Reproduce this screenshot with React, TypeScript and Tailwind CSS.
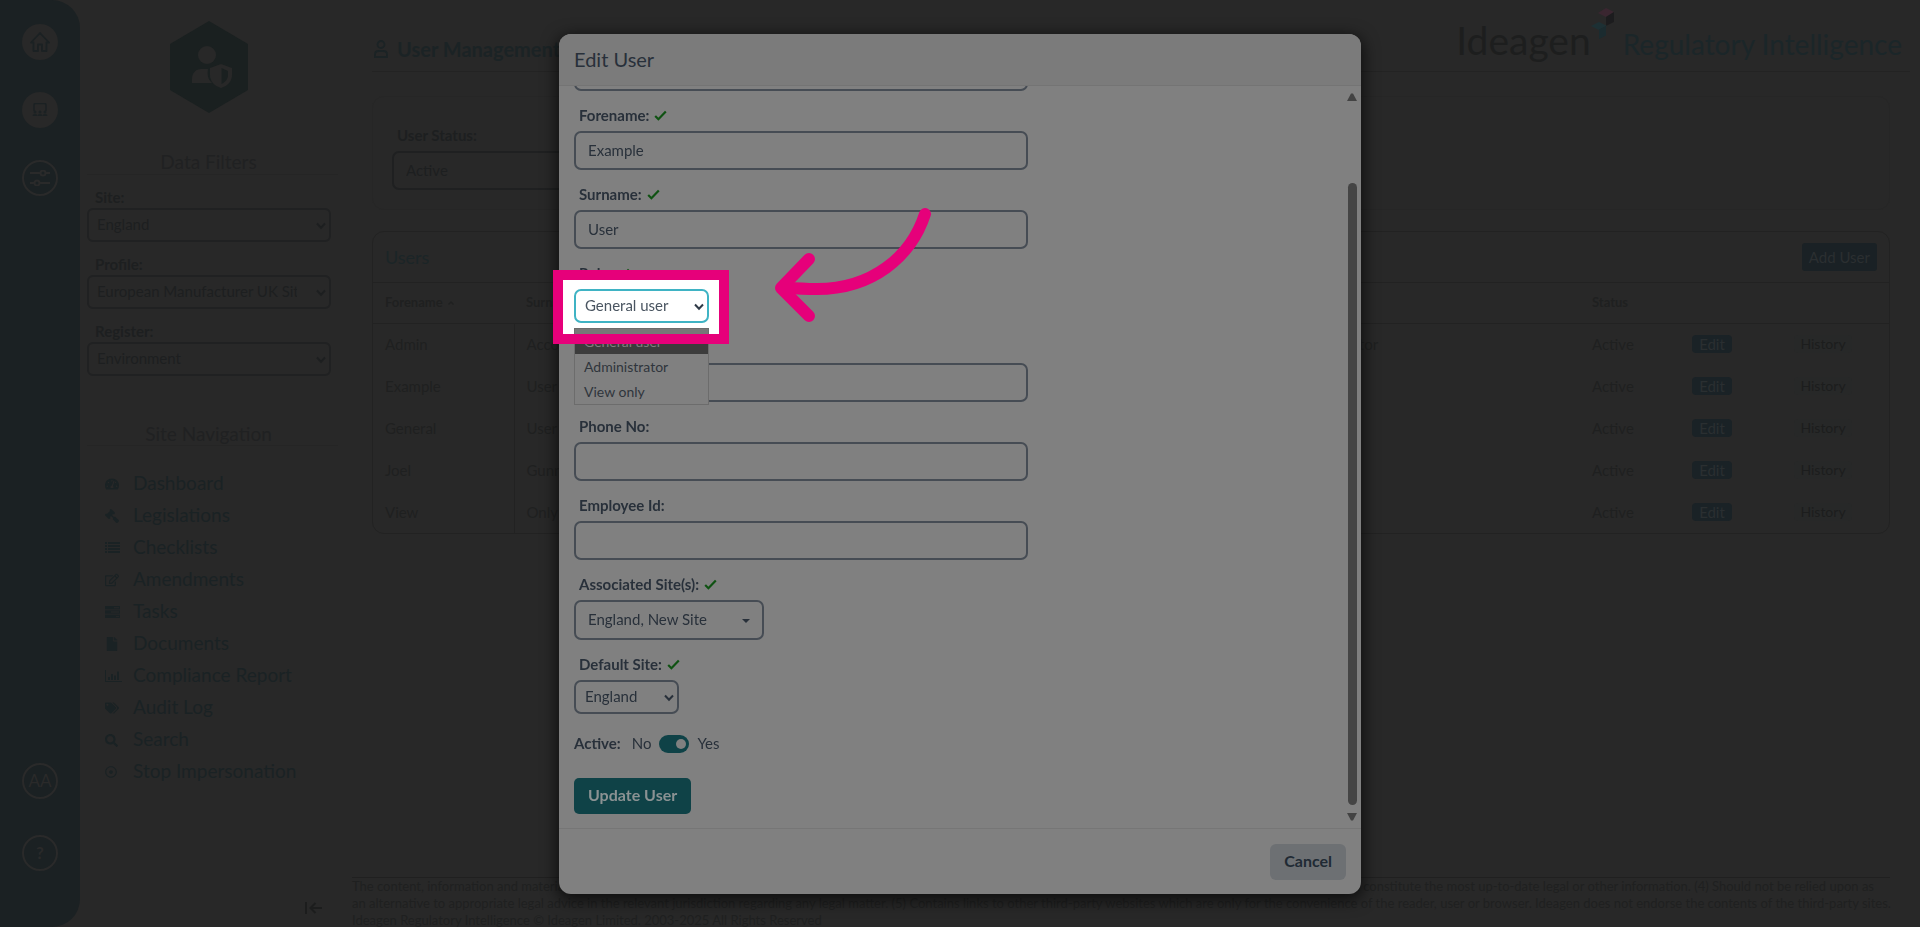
import React, { useState } from "react";
import { FaTachometerAlt, FaGavel, FaRegEdit, FaFile, FaTags, FaSearch, FaRegDotCircle } from "react-icons/fa";

const navItems = [
  { label: "Dashboard", icon: <FaTachometerAlt size={14} /> },
  { label: "Legislations", icon: <FaGavel size={14} className="-scale-x-100" /> },
  { label: "Checklists", icon: <ListIcon /> },
  { label: "Amendments", icon: <FaRegEdit size={14} /> },
  { label: "Tasks", icon: <TasksIcon /> },
  { label: "Documents", icon: <FaFile size={14} /> },
  { label: "Compliance Report", icon: <ChartIcon /> },
  { label: "Audit Log", icon: <FaTags size={14} /> },
  { label: "Search", icon: <FaSearch size={13} /> },
  { label: "Stop Impersonation", icon: <FaRegDotCircle size={12} /> },
];

const users = [
  { forename: "Admin", surname: "Account", role: "Administrator" },
  { forename: "Example", surname: "User", role: "" },
  { forename: "General", surname: "User", role: "" },
  { forename: "Joel", surname: "Gunn", role: "" },
  { forename: "View", surname: "Only", role: "" },
];

function ListIcon() {
  return (
    <svg width="15" height="14" viewBox="0 0 15 14" fill="currentColor" aria-hidden="true">
      {[1, 4, 7, 10].map((y) => (
        <g key={y}>
          <rect x="0" y={y} width="2" height="2" />
          <rect x="3" y={y} width="12" height="2" />
        </g>
      ))}
    </svg>
  );
}

function TasksIcon() {
  return (
    <svg width="15" height="14" viewBox="0 0 15 14" fill="currentColor" aria-hidden="true">
      <rect x="0" y="1" width="15" height="3.4" />
      <rect x="0" y="5.3" width="15" height="3.4" />
      <rect x="0" y="9.6" width="15" height="3.4" />
      <path d="M9 2.3h5v.9H9zM6 6.6h8v.9H6zM11 10.9h3v.9h-3z" fill="#282828" />
    </svg>
  );
}

function ChartIcon() {
  return (
    <svg width="17" height="14" viewBox="0 0 17 14" fill="currentColor" aria-hidden="true">
      <path d="M0 1h1v11h16v1H0z" />
      <path d="M3 8h2v3H3zM6 5h2v6H6zM9 6.5h2V11H9zM12 2.5h2V11h-2z" />
    </svg>
  );
}

function Chevron({ className }: { className: string }) {
  return (
    <svg width="10" height="8" viewBox="0 0 10 8" fill="none" stroke="currentColor" strokeWidth="2" className={className} aria-hidden="true">
      <path d="M1 1.5 5 5.7 9 1.5" />
    </svg>
  );
}

function Tick() {
  return (
    <svg width="13" height="11" viewBox="0 0 13 11" fill="none" stroke="#0f5212" strokeWidth="2.2" className="ml-[5px]" aria-hidden="true">
      <path d="M1.2 6 4.4 9.2 11.8 1.4" />
    </svg>
  );
}

function SideSelect({ id, label, value }: { id: string; label: string; value: string }) {
  return (
    <div className="flex flex-col">
      <label htmlFor={id} className="h-[33px] px-2 pt-[13px] text-[15px] leading-[18px] font-bold">{label}</label>
      <div className="relative">
        <select id={id} className="block h-[34px] w-full appearance-none rounded-[6px] border-2 border-[#202122] pr-[32px] pb-[2px] pl-2 text-[15px]">
          <option>{value}</option>
        </select>
        <Chevron className="pointer-events-none absolute top-[14px] right-[5px]" />
      </div>
    </div>
  );
}

function FieldLabel({ htmlFor, text, ok }: { htmlFor: string; text: string; ok?: boolean }) {
  return (
    <label htmlFor={htmlFor} className="flex h-10 shrink-0 items-center px-[5px] pt-[8px] text-[15px] font-bold">
      {text}
      {ok && <Tick />}
    </label>
  );
}

function TextField({ id, label, value, ok }: { id: string; label?: string; value: string; ok?: boolean }) {
  return (
    <div className="flex w-full max-w-[454px] shrink-0 flex-col">
      {label ? <FieldLabel htmlFor={id} text={label} ok={ok} /> : <div className="h-10" />}
      <input
        id={id}
        aria-label={label ?? "Email"}
        defaultValue={value}
        className="h-[39px] rounded-[7px] border-2 border-[#464c54] px-3 pb-[2px] text-[15px] outline-none"
      />
    </div>
  );
}

function Rail() {
  return (
    <aside className="flex w-20 shrink-0 flex-col items-center rounded-r-[28px] bg-[#1b2123] pt-6 pb-14 text-[#2a2a2a]">
      <div className="flex flex-col gap-8">
        <button aria-label="Home" className="grid size-9 place-items-center rounded-full bg-[#282828] text-[#1b2123]">
          <svg width="20" height="20" viewBox="0 0 20 20" fill="none" stroke="currentColor" strokeWidth="1.8" strokeLinejoin="round">
            <path d="M1 10.5 10 1l9 9.500h-2.500V19h-4.500v-6.500h-4V19H3.500v-8.500z" />
          </svg>
        </button>
        <button aria-label="Training" className="grid size-9 place-items-center rounded-full bg-[#282828] text-[#1b2123]">
          <svg width="16" height="14" viewBox="0 0 16 14" fill="currentColor">
            <path d="M2 8V2q0-1.500 1.500-1.500h9Q14 .5 14 2v6" fill="none" stroke="currentColor" strokeWidth="1.500" />
            <circle cx="3" cy="9" r="1.500" /><circle cx="8" cy="9" r="1.500" /><circle cx="13" cy="9" r="1.500" />
            <path d="M.5 13q0-2 2.500-2t2.500 2zM5.500 13q0-2 2.500-2t2.500 2zM10.500 13q0-2 2.500-2t2.500 2z" />
          </svg>
        </button>
        <button aria-label="Filters" className="grid size-9 place-items-center rounded-full border-2 border-[#2a2a2a]">
          <svg width="20" height="16" viewBox="0 0 20 16" fill="none" stroke="currentColor" strokeWidth="2">
            <path d="M0 3h10M16 3h4M0 13h4M10 13h10" />
            <circle cx="13" cy="3" r="2.500" /><circle cx="7" cy="13" r="2.500" />
          </svg>
        </button>
      </div>
      <div className="mt-auto flex flex-col gap-9">
        <button className="grid size-9 place-items-center rounded-full border-2 border-[#2a2a2a] text-[17px]">AA</button>
        <button aria-label="Help" className="grid size-9 place-items-center rounded-full border-2 border-[#2a2a2a] text-[17px] font-bold">?</button>
      </div>
    </aside>
  );
}

function Sidebar() {
  return (
    <nav className="flex w-[272px] shrink-0 flex-col pr-[14px] pl-[7px]">
      <svg width="78" height="92" viewBox="0 0 78 92" className="mt-[21px] mr-2 self-center" aria-hidden="true">
        <path d="M39 0 78 23v46L39 92 0 69V23z" fill="#1a2020" />
        <g fill="#282828">
          <circle cx="37" cy="34" r="9" />
          <path d="M22 62v-4c0-6 4-10 9-10h7c-1 6 0 10 4 14z" />
          <path d="m51 43 11 4v7c0 6-4 11-11 13-7-2-11-7-11-13v-7z" />
        </g>
        <path d="M51.500 47v16c4-2 6.500-5 6.500-9v-4z" fill="#1a2020" />
      </svg>
      <h2 className="mt-[38px] border-b border-[#252525] pr-2 pb-px text-center text-[19px] leading-[22px] text-[#202122]">Data Filters</h2>
      <div className="mr-[7px] text-[#1d1f20]">
        <SideSelect id="site" label="Site:" value="England" />
        <SideSelect id="profile" label="Profile:" value="European Manufacturer UK Site" />
        <SideSelect id="register" label="Register:" value="Environment" />
      </div>
      <h2 className="mt-[47px] border-b border-[#252525] pr-2 text-center text-[19px] leading-[22px] text-[#202122]">Site Navigation</h2>
      <ul className="mt-[21px] pl-[18px] text-[19px] text-[#1a2224]">
        {navItems.map((n) => (
          <li key={n.label} className="h-8">
            <a href="#" className="flex h-8 items-center">
              <span className="w-7 pt-[2px]">{n.icon}</span>
              {n.label}
            </a>
          </li>
        ))}
      </ul>
      <button aria-label="Collapse" className="mt-auto mr-[15px] mb-[12px] self-end text-[#1c1d1d]">
        <svg width="18" height="14" viewBox="0 0 18 14" fill="none" stroke="currentColor" strokeWidth="2">
          <path d="M1 1v12M17 7H6M10.500 2 5.500 7l5 5" />
        </svg>
      </button>
    </nav>
  );
}

function Main() {
  return (
    <div className="flex min-w-0 flex-1 flex-col">
      <main className="pr-[10px] pl-5">
        <header className="flex h-[72px] items-center justify-between border-b border-[#232323]">
          <h1 className="flex items-center gap-[9px] pt-[26px] pl-[2px] text-[20px] font-bold text-[#1b2325]">
            <svg width="14" height="18" viewBox="0 0 14 18" fill="none" stroke="currentColor" strokeWidth="1.800" aria-hidden="true">
              <circle cx="7" cy="4.500" r="3.500" />
              <path d="M1 17v-2.500Q1 11 4.500 11h5q3.500 0 3.500 3.500V17z" />
            </svg>
            User Management
          </h1>
          <div className="flex items-baseline pt-3 pr-2">
            <span className="text-[39px] leading-[48px] text-[#1d1e1e]">Ideagen</span>
            <svg width="24" height="32" viewBox="0 0 24 32" className="-mt-2 mr-2 shrink-0 self-start" aria-hidden="true">
              <path d="m7 5 8-5 8 4-8 5z" fill="#3a2630" />
              <path d="m23 4-8 5v9l8-4z" fill="#1c1c1e" />
              <path d="m0 18 8-4 8 4-8 4z" fill="#1d3034" />
              <path d="m15 18-7 3.500V31l7-3.500z" fill="#1b2b2f" />
            </svg>
            <span className="text-[28px] leading-[48px] text-[#1b2629]">Regulatory Intelligence</span>
          </div>
        </header>
        <div className="mr-5">
          <section className="mt-6 h-[114px] rounded-[12px] border border-[#262626] px-[19px] pt-[27px] text-[#1d1f20]">
            <label htmlFor="status" className="block px-[5px] pb-[5px] text-[15px] leading-[22px] font-bold">User Status:</label>
            <div className="w-[240px]">
              <select id="status" className="h-[39px] w-full appearance-none rounded-[7px] border-2 border-[#1f2021] px-3 text-[15px]">
                <option>Active</option>
              </select>
            </div>
          </section>
          <section className="mt-[21px] rounded-[12px] border border-[#222222] text-[#1f2020]">
            <div className="flex h-[51px] items-center justify-between border-b border-[#222222] pr-3 pl-3">
              <h2 className="text-[18px] text-[#1b2527]">Users</h2>
              <button className="h-7 rounded-[3px] bg-[#1a2125] px-[7px] text-[15px] text-[#2b2f31]">Add User</button>
            </div>
            <table className="w-full table-fixed text-left text-[15px]">
              <colgroup>
                <col className="w-[141px]" />
                <col className="w-[180px]" />
                <col />
                <col className="w-[304px]" />
                <col className="w-[100px]" />
                <col className="w-[102px]" />
                <col className="w-[107px]" />
              </colgroup>
              <thead className="h-10 border-b border-[#222222] text-[13px]">
                <tr>
                  <th className="px-3">
                    <span className="flex items-center gap-[5px]">
                      Forename
                      <svg width="6" height="4" viewBox="0 0 6 4" fill="none" stroke="currentColor" strokeWidth="1.400" aria-hidden="true"><path d="M.5 3.500 3 1l2.500 2.500" /></svg>
                    </span>
                  </th>
                  <th className="px-3">Surname</th>
                  <th />
                  <th />
                  <th className="px-3">Status</th>
                  <th />
                  <th />
                </tr>
              </thead>
              <tbody>
                {users.map((u) => (
                  <tr key={u.forename} className="h-[42px]">
                    <td className="border-r border-[#222222] px-3">{u.forename}</td>
                    <td className="px-3">{u.surname}</td>
                    <td />
                    <td className="px-3">{u.role}</td>
                    <td className="px-3">Active</td>
                    <td className="px-3">
                      <button className="block h-[18px] w-10 rounded-[4px] bg-[#1a2226] text-[15px] leading-[18px] text-[#2a2f31]">Edit</button>
                    </td>
                    <td className="px-3">
                      <button className="block h-[18px] w-[58px] rounded-[4px] bg-[#272828] text-sm leading-[18px] text-[#1c1d1d]">History</button>
                    </td>
                  </tr>
                ))}
              </tbody>
            </table>
          </section>
        </div>
      </main>
      <footer className="mt-auto mr-[30px] h-[50px] border-t border-[#202020] text-[13px] leading-[17px] whitespace-nowrap text-[#1f2020]">
        <div className="flex justify-between pr-4">
          <p>The content, information and materials</p>
          <p>not constitute the most up-to-date legal or other information. (4) Should not be relied upon as</p>
        </div>
        <p>
          an alternative to appropriate legal advice in the relevant jurisdiction regarding any legal matter. (5) Contains links to other third-party websites which are only for the convenience of the reader, user or browser. Ideagen does not endorse the contents of the third-party sites.
        </p>
        <p>Ideagen Regulatory Intelligence © Ideagen Limited. 2003-2025 All Rights Reserved</p>
      </footer>
    </div>
  );
}

function RoleField() {
  return (
    <div className="shrink-0">
      <FieldLabel htmlFor="role" text="Role:" ok />
      <div className="relative w-[135px]">
        <div className="absolute -top-[19px] -right-[20px] -bottom-[21px] -left-[21px] bg-white" />
        <select id="role" className="relative z-10 block h-[34px] w-full appearance-none rounded-[7px] border-2 border-[#3fb3c4] bg-white px-[9px] pb-[2px] text-[15px] text-[#4a5561] outline-none">
          <option>General user</option>
        </select>
        <Chevron className="pointer-events-none absolute top-[14px] right-[5px] z-10 text-[#2f3a47]" />
        <ul className="absolute top-[39px] left-0 z-20 w-full border border-[#6c6c6c] bg-[#808080] text-sm leading-[25px] text-[#2f353c]">
          <li className="bg-[linear-gradient(#777777_6px,#3c3c3c_6px)] px-[9px] text-[#808080]">General user</li>
          <li className="px-[9px]">Administrator</li>
          <li className="px-[9px]">View only</li>
        </ul>
        <div className="pointer-events-none absolute -top-[19px] -right-[20px] -bottom-[21px] -left-[21px] z-30 border-10 border-[#e6007a]" />
        <svg width="164" height="122" viewBox="0 0 164 122" fill="none" stroke="#e6007a" strokeWidth="12" strokeLinecap="round" strokeLinejoin="round" className="pointer-events-none absolute -top-[84px] left-[197px] z-30" aria-hidden="true">
          <path d="M154 9C140 52 101 84 46 84c-6 0-14 0-32-1.500" />
          <path d="M38 54 10 83l28 28" />
        </svg>
      </div>
    </div>
  );
}

function EditUserDialog() {
  const [active, setActive] = useState(true);
  return (
    <div className="fixed inset-0 flex justify-center pt-[34px] pb-[33px]">
      <div role="dialog" aria-labelledby="dialog-title" className="flex w-full max-w-[802px] flex-col rounded-[12px] bg-[#808080] text-[#28303a] shadow-[0_4px_16px_2px_rgba(0,0,0,0.65)]">
        <div className="flex h-[52px] shrink-0 items-center rounded-t-[12px] border-b border-[#747474] bg-[#7b7b7b] px-[15px] pb-[2px]">
          <h2 id="dialog-title" className="text-[20px]">Edit User</h2>
        </div>
        <div className="flex min-h-0 flex-1">
          <form className="-ml-4 flex min-w-0 flex-1 flex-col justify-end overflow-hidden pr-4 pb-[14px] pl-[31px]">
            <TextField id="username" value="" />
            <TextField id="forename" label="Forename:" value="Example" ok />
            <TextField id="surname" label="Surname:" value="User" ok />
            <RoleField />
            <TextField id="email" value="" />
            <TextField id="phone" label="Phone No:" value="" />
            <TextField id="employee" label="Employee Id:" value="" />
            <div className="shrink-0">
              <FieldLabel htmlFor="sites" text="Associated Site(s):" ok />
              <button id="sites" type="button" className="flex h-10 w-[190px] items-center justify-between rounded-[7px] border-2 border-[#464c54] px-3 pb-[2px] text-[15px]">
                England, New Site
                <svg width="8" height="4" viewBox="0 0 8 4" fill="currentColor" className="mt-1" aria-hidden="true"><path d="M0 0h8L4 4z" /></svg>
              </button>
            </div>
            <div className="shrink-0">
              <FieldLabel htmlFor="default-site" text="Default Site:" ok />
              <div className="relative w-[105px]">
                <select id="default-site" className="block h-[34px] w-full appearance-none rounded-[7px] border-2 border-[#464c54] px-[9px] pb-[2px] text-[15px]">
                  <option>England</option>
                </select>
                <Chevron className="pointer-events-none absolute top-[14px] right-[5px]" />
              </div>
            </div>
            <div className="flex h-16 shrink-0 items-center pb-[6px] text-[15px]">
              <span className="font-bold">Active:</span>
              <span className="ml-[11px]">No</span>
              <label className="relative mx-2 mt-[2px] h-[18px] w-[30px] rounded-full bg-[#0f4247]">
                <input type="checkbox" aria-label="Active" checked={active} onChange={(e) => setActive(e.target.checked)} className="peer absolute inset-0 opacity-0" />
                <span className="absolute top-1 left-1 size-[10px] rounded-full bg-[#808080] peer-checked:left-[17px]" />
              </label>
              <span>Yes</span>
            </div>
            <button type="button" className="h-9 w-fit shrink-0 rounded-[5px] bg-[#0f4247] px-[14px] pb-[2px] text-base font-bold text-[#8b9293]">Update User</button>
          </form>
          <div className="flex w-4 flex-col items-center pt-[6px] pr-[2px] pb-[7px]" aria-hidden="true">
            <svg width="10" height="8" viewBox="0 0 10 8" fill="#434343" className="my-px"><path d="M4 .5h2L10 8H0z" /></svg>
            <div className="mt-[81px] mb-2 w-[9px] flex-1 rounded-full bg-[#454545]" />
            <svg width="10" height="8" viewBox="0 0 10 8" fill="#434343"><path d="M0 0h10L6 7.500H4z" /></svg>
          </div>
        </div>
        <div className="flex h-[66px] shrink-0 items-center justify-end border-t border-[#767676] px-[15px]">
          <button type="button" className="h-9 rounded-[6px] bg-[#6d7073] px-[14px] pb-[2px] text-base font-bold text-[#202a34]">Cancel</button>
        </div>
      </div>
    </div>
  );
}

export default function App() {
  return (
    <div className="flex min-h-screen overflow-hidden bg-[#282828] font-[Lato,sans-serif]">
      <Rail />
      <Sidebar />
      <Main />
      <EditUserDialog />
    </div>
  );
}
